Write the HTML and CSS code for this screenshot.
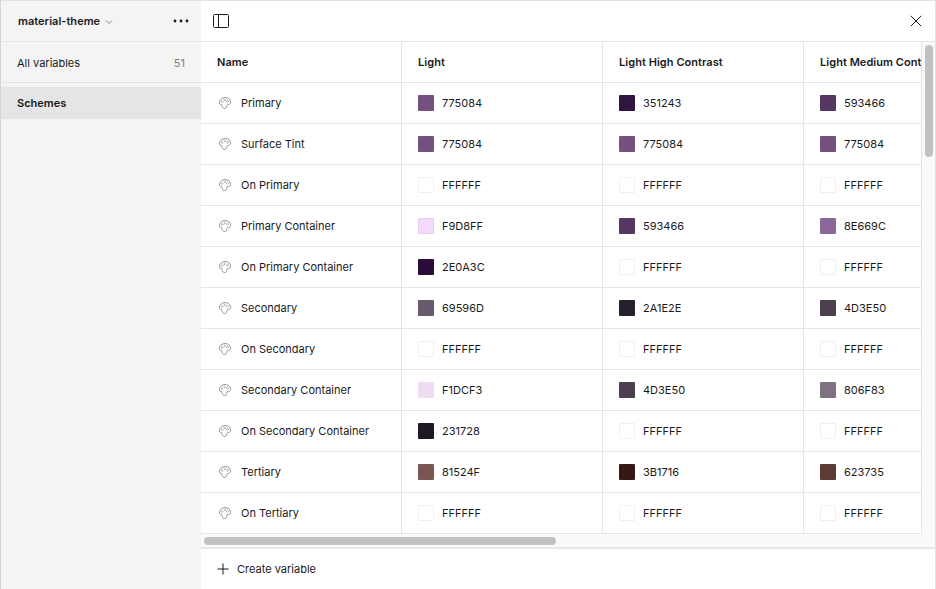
FILE: index.html
```html
<!DOCTYPE html>
<html lang="en">
<head>
<meta charset="utf-8">
<title>material-theme</title>
<link rel="stylesheet" href="styles.css">
</head>
<body>
<svg class="defs" aria-hidden="true">
  <symbol id="palette" viewBox="0 0 14 14">
    <path d="M7 1.500C3.800 1.500 1.400 3.900 1.400 6.900c0 1.200.8 1.700 1.600 1.500.9-.1 1.200.5 1.100 1.200-.2 1.600 1 2.900 2.600 2.900 1.300 0 2.100-.9 2-2.100-.1-1.100.5-1.800 1.600-1.800 1.300 0 2.300-.9 2.300-2.300C12.600 3.500 10.200 1.500 7 1.500z" fill="none" stroke="currentColor" stroke-width=".8"/>
    <circle cx="4.200" cy="5.600" r=".8" fill="none" stroke="currentColor" stroke-width=".5"/>
    <circle cx="6.600" cy="3.900" r=".8" fill="none" stroke="currentColor" stroke-width=".5"/>
    <circle cx="9.500" cy="5.300" r="1" fill="none" stroke="currentColor" stroke-width=".5"/>
  </symbol>
</svg>
<div class="window">
  <aside class="sidebar">
    <header class="collection">
      <b>material-theme</b>
      <svg class="chevron" viewBox="0 0 8 6"><path d="M1 1.500l3 3 3-3"/></svg>
      <svg class="dots" viewBox="0 0 16 4"><circle cx="2" cy="2" r="1.400"/><circle cx="8" cy="2" r="1.400"/><circle cx="14" cy="2" r="1.400"/></svg>
    </header>
    <div class="all"><span>All variables</span><span class="count">51</span></div>
    <div class="group">Schemes</div>
  </aside>
  <main class="main">
    <header class="toolbar">
      <svg class="panel" viewBox="0 0 16 14"><rect x=".5" y=".5" width="15" height="13" rx="1"/><path d="M5.500 .5v13"/></svg>
      <svg class="close" viewBox="0 0 12 12"><path d="M.8 .8l10.400 10.400M11.200 .8L.8 11.200"/></svg>
    </header>
    <section class="scroller">
      <div class="table">
        <div class="row head"><div>Name</div><div>Light</div><div>Light High Contrast</div><div>Light Medium Contrast</div></div>
        <div class="row"><div><svg><use href="#palette"/></svg>Primary</div><div><i style="background:#75517F"></i>775084</div><div><i style="background:#311541"></i>351243</div><div><i style="background:#563763"></i>593466</div></div>
        <div class="row"><div><svg><use href="#palette"/></svg>Surface Tint</div><div><i style="background:#75517F"></i>775084</div><div><i style="background:#75517F"></i>775084</div><div><i style="background:#75517F"></i>775084</div></div>
        <div class="row"><div><svg><use href="#palette"/></svg>On Primary</div><div><i class="outlined"></i>FFFFFF</div><div><i class="outlined"></i>FFFFFF</div><div><i class="outlined"></i>FFFFFF</div></div>
        <div class="row"><div><svg><use href="#palette"/></svg>Primary Container</div><div><i class="outlined" style="background:#F4D9FF"></i>F9D8FF</div><div><i style="background:#563763"></i>593466</div><div><i style="background:#8B6899"></i>8E669C</div></div>
        <div class="row"><div><svg><use href="#palette"/></svg>On Primary Container</div><div><i style="background:#2B0D39"></i>2E0A3C</div><div><i class="outlined"></i>FFFFFF</div><div><i class="outlined"></i>FFFFFF</div></div>
        <div class="row"><div><svg><use href="#palette"/></svg>Secondary</div><div><i style="background:#685A6C"></i>69596D</div><div><i style="background:#281F2D"></i>2A1E2E</div><div><i style="background:#4C3F4F"></i>4D3E50</div></div>
        <div class="row"><div><svg><use href="#palette"/></svg>On Secondary</div><div><i class="outlined"></i>FFFFFF</div><div><i class="outlined"></i>FFFFFF</div><div><i class="outlined"></i>FFFFFF</div></div>
        <div class="row"><div><svg><use href="#palette"/></svg>Secondary Container</div><div><i style="background:#EEDCF2"></i>F1DCF3</div><div><i style="background:#4C3F4F"></i>4D3E50</div><div><i style="background:#7F7082"></i>806F83</div></div>
        <div class="row"><div><svg><use href="#palette"/></svg>On Secondary Container</div><div><i style="background:#211827"></i>231728</div><div><i class="outlined"></i>FFFFFF</div><div><i class="outlined"></i>FFFFFF</div></div>
        <div class="row"><div><svg><use href="#palette"/></svg>Tertiary</div><div><i style="background:#7B5550"></i>81524F</div><div><i style="background:#361917"></i>3B1716</div><div><i style="background:#5D3A36"></i>623735</div></div>
        <div class="row"><div><svg><use href="#palette"/></svg>On Tertiary</div><div><i class="outlined"></i>FFFFFF</div><div><i class="outlined"></i>FFFFFF</div><div><i class="outlined"></i>FFFFFF</div></div>
      </div>
      <div class="vtrack"><span></span></div>
      <div class="htrack"><span></span></div>
    </section>
    <footer class="create">
      <svg viewBox="0 0 12 12"><path d="M6 .5v11M.5 6h11"/></svg>
      <span>Create variable</span>
    </footer>
  </main>
</div>
</body>
</html>
```
FILE: styles.css
```css
* { box-sizing: border-box; }
body {
  margin: 0;
  font: 11px/16px Inter, "Liberation Sans", sans-serif;
  color: #1a1a1a;
}
svg { display: block; flex: none; fill: none; stroke: #1a1a1a; }
.defs { position: absolute; width: 0; height: 0; }
.window {
  display: grid;
  grid-template-columns: 200px 1fr;
  width: 936px;
  height: 589px;
  overflow: hidden;
  border: solid #e2e2e2;
  border-width: 1px 1px 0;
  border-left-color: #d4d4d4;
  background: #fff;
}
.sidebar { background: #f4f4f4; }
.collection {
  display: flex;
  align-items: center;
  height: 41px;
  padding: 0 12px 0 17px;
  border-bottom: 1px solid #e5e5e5;
}
.collection b { font-weight: 600; letter-spacing: .03px; }
.chevron { width: 8px; height: 6px; margin: 1px 0 0 5px; stroke: #8a8a8a; }
.dots { width: 16px; height: 4px; margin-left: auto; fill: #1a1a1a; stroke: none; }
.all {
  display: flex;
  align-items: center;
  justify-content: space-between;
  height: 41px;
  padding: 2px 16px 0;
  border-bottom: 1px solid #e5e5e5;
}
.count { color: #808080; }
.group {
  height: 32px;
  margin-top: 4px;
  padding: 8px 16px;
  background: #e5e5e5;
  font-weight: 600;
}
.main { display: flex; flex-direction: column; min-width: 0; }
.toolbar {
  display: flex;
  align-items: center;
  justify-content: space-between;
  height: 41px;
  padding: 0 13px 0 12px;
  border-bottom: 1px solid #e5e5e5;
}
.panel { width: 16px; height: 14px; }
.close { width: 12px; height: 12px; }
.scroller {
  display: grid;
  grid-template: 492px 15px / 721px 1fr;
  border-bottom: 2px solid #e8e8e8;
  background: #fafafa;
  height: 507px;
  overflow: hidden;
}
.table { overflow: hidden; border-right: 1px solid #e5e5e5; background: #fff; }
.row {
  display: grid;
  grid-template-columns: 201px 201px 201px 117px;
  height: 41px;
  border-bottom: 1px solid #e5e5e5;
}
.row > div {
  display: flex;
  align-items: center;
  padding-left: 16px;
  overflow: hidden;
  white-space: nowrap;
  border-right: 1px solid #e5e5e5;
}
.row > div:last-child { border-right: 0; }
.head { font-weight: 600; letter-spacing: .05px; }
.row svg { width: 14px; height: 14px; margin: 0 9px 0 1px; color: #7d7d7d; stroke: none; }
.row i {
  flex: none;
  width: 16px;
  height: 16px;
  margin-right: 8px;
  border-radius: 1px;
}
.row .outlined { border: 1px solid rgba(0, 0, 0, .06); }
.vtrack { padding: 3px; }
.vtrack span { display: block; width: 8px; height: 112px; border-radius: 4px; background: #c1c1c1; }
.htrack { padding: 3px; }
.htrack span { display: block; width: 352px; height: 8px; border-radius: 4px; background: #c1c1c1; }
.create { display: flex; align-items: center; height: 40px; padding: 0 16px; gap: 8px; }
.create svg { width: 12px; height: 12px; }
```
